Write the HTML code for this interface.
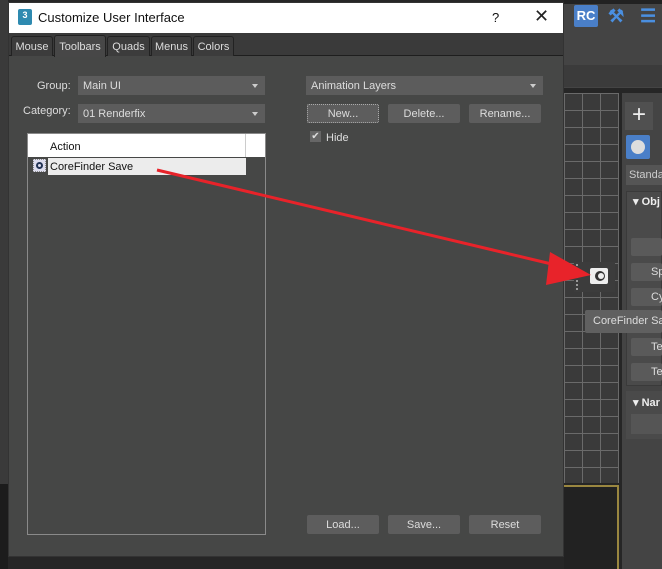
<!DOCTYPE html><html><head><style>
*{margin:0;padding:0;box-sizing:border-box}
body{width:662px;height:569px;overflow:hidden;background:#262626;font-family:"Liberation Sans",sans-serif;font-size:11px;color:#ddd;position:relative}
.a{position:absolute}
.combo{position:absolute;background:#5c5c5c;height:19px;color:#ddd;padding:4px 5px 0;font-size:11px}
.combo:after{content:"";position:absolute;right:7px;top:8px;border:3px solid transparent;border-top:4px solid #ccc}
.btn{position:absolute;background:#5d5d5d;height:19px;width:72px;border-radius:2px;text-align:center;line-height:21px;color:#ddd;font-size:11px}
.tab{position:absolute;top:36px;height:20px;background:#3c3c3c;border:1px solid #222;border-bottom:none;border-radius:3px 3px 0 0;line-height:20px;text-align:center;color:#ddd;font-size:11px}
</style></head><body>
<div class="a" style="left:0;top:0;width:8px;height:484px;background:#3a3a3a"></div>
<div class="a" style="left:0;top:484px;width:8px;height:85px;background:#1c1c1c"></div>
<div class="a" style="left:564px;top:0;width:98px;height:88px;background:#444"></div>
<div class="a" style="left:564px;top:0;width:98px;height:4px;background:#222"></div>
<div class="a" style="left:574px;top:5px;width:24px;height:22px;background:#4a7fc8;border-radius:2px;color:#fff;font-weight:bold;font-size:13px;text-align:center;line-height:22px">RC</div>
<div class="a" style="left:608px;top:6px;color:#4a8fe0;font-size:18px;font-weight:bold">⚒</div>
<div class="a" style="left:640px;top:6px;color:#4a8fe0;font-size:18px;font-weight:bold">☰</div>
<div class="a" style="left:564px;top:65px;width:98px;height:22px;background:#3b3b3b"></div>
<div class="a" style="left:564px;top:93px;width:55px;height:390px;background:#3a3a3a;background-image:linear-gradient(#6a6a6a 1px,transparent 1px),linear-gradient(90deg,#6a6a6a 1px,transparent 1px);background-size:18px 17px"></div>
<div class="a" style="left:564px;top:485px;width:55px;height:84px;background:#222;border-top:2px solid #9a8740;border-right:2px solid #9a8740"></div>
<div class="a" style="left:622px;top:93px;width:40px;height:476px;background:#444"></div>
<div class="a" style="left:625px;top:102px;width:28px;height:28px;background:#505050;color:#eee;font-size:24px;text-align:center;line-height:26px">+</div>
<div class="a" style="left:626px;top:135px;width:24px;height:24px;background:#4a7fc8;border-radius:2px"><div class="a" style="left:5px;top:5px;width:14px;height:14px;border-radius:50%;background:#ddd"></div></div>
<div class="a" style="left:626px;top:165px;width:36px;height:20px;background:#555;color:#ccc;padding:4px 3px">Standa</div>
<div class="a" style="left:626px;top:191px;width:36px;height:195px;background:#4a4a4a;border:1px solid #3a3a3a"></div>
<div class="a" style="left:633px;top:195px;color:#eee;font-weight:bold;font-size:11px">▾ Obj</div>
<div class="a" style="left:631px;top:238px;width:31px;height:18px;background:#5a5a5a;border-radius:2px"></div>
<div class="a" style="left:631px;top:263px;width:31px;height:18px;background:#5a5a5a;border-radius:2px;color:#ddd;padding:3px 0 0 20px">Sp</div>
<div class="a" style="left:631px;top:288px;width:31px;height:18px;background:#5a5a5a;border-radius:2px;color:#ddd;padding:3px 0 0 20px">Cy</div>
<div class="a" style="left:631px;top:338px;width:31px;height:18px;background:#5a5a5a;border-radius:2px;color:#ddd;padding:3px 0 0 20px">Te</div>
<div class="a" style="left:631px;top:363px;width:31px;height:18px;background:#5a5a5a;border-radius:2px;color:#ddd;padding:3px 0 0 20px">Te</div>
<div class="a" style="left:626px;top:391px;width:36px;height:48px;background:#4a4a4a"></div>
<div class="a" style="left:633px;top:396px;color:#eee;font-weight:bold">▾ Nar</div>
<div class="a" style="left:631px;top:414px;width:31px;height:20px;background:#555"></div>
<div class="a" style="left:574px;top:262px;width:41px;height:30px;background:#3c3c3c"></div>
<div class="a" style="left:576px;top:264px;width:4px;height:26px;border-left:2px dotted #999"></div>
<div class="a" style="left:590px;top:268px;width:18px;height:16px;background:#eee;border-radius:2px"><div class="a" style="left:5px;top:3px;width:10px;height:10px;border-radius:50%;background:#333"></div><div class="a" style="left:8px;top:5px;width:6px;height:6px;border-radius:50%;background:#eee"></div></div>
<div class="a" style="left:585px;top:310px;width:77px;height:23px;background:#606060;border-radius:2px;color:#ddd;padding:5px 0 0 8px;white-space:nowrap;overflow:hidden">CoreFinder Save</div>
<div class="a" style="left:8px;top:2px;width:556px;height:555px;background:#464746;border:1px solid #333"></div>
<div class="a" style="left:9px;top:3px;width:554px;height:30px;background:#fff"></div>
<div class="a" style="left:18px;top:9px;width:14px;height:16px;background:#2e8ab0;border-radius:2px;color:#fff;font-size:9px;font-weight:bold;text-align:center;line-height:12px">3</div>
<div class="a" style="left:38px;top:10px;color:#111;font-size:13px">Customize User Interface</div>
<div class="a" style="left:492px;top:10px;color:#111;font-size:13px">?</div>
<div class="a" style="left:534px;top:6px;color:#222;font-size:18px">✕</div>
<div class="a" style="left:9px;top:33px;width:554px;height:23px;background:#3a3a3a;border-bottom:1px solid #1e1e1e"></div>
<div class="tab" style="left:11px;width:42px">Mouse</div>
<div class="tab" style="left:54px;top:35px;height:22px;width:52px;background:#474747;line-height:22px">Toolbars</div>
<div class="tab" style="left:107px;width:43px">Quads</div>
<div class="tab" style="left:151px;width:41px">Menus</div>
<div class="tab" style="left:193px;width:41px">Colors</div>
<div class="a" style="left:37px;top:80px">Group:</div>
<div class="combo" style="left:78px;top:76px;width:187px">Main UI</div>
<div class="a" style="left:23px;top:105px">Category:</div>
<div class="combo" style="left:78px;top:104px;width:187px">01 Renderfix</div>
<div class="a" style="left:27px;top:133px;width:239px;height:402px;border:1px solid #8a8a8a"></div>
<div class="a" style="left:28px;top:134px;width:218px;height:23px;background:#fff;border-right:1px solid #ccc;color:#111;padding:7px 0 0 22px">Action</div>
<div class="a" style="left:246px;top:134px;width:19px;height:23px;background:#fff"></div>
<div class="a" style="left:48px;top:158px;width:198px;height:17px;background:#ececec;color:#111;padding:3px 0 0 2px">CoreFinder Save</div>
<div class="a" style="left:33px;top:159px;width:13px;height:13px;border:1px dotted #888;background:#dde"><div class="a" style="left:2px;top:2px;width:7px;height:7px;border:2px solid #235;border-radius:50%"></div></div>
<div class="combo" style="left:306px;top:76px;width:237px">Animation Layers</div>
<div class="btn" style="left:307px;top:104px;border:1px dotted #aaa;line-height:19px">New...</div>
<div class="btn" style="left:388px;top:104px">Delete...</div>
<div class="btn" style="left:469px;top:104px">Rename...</div>
<div class="a" style="left:310px;top:131px;width:11px;height:11px;background:#666;color:#ddd;font-size:10px;line-height:11px;text-align:center">✔</div>
<div class="a" style="left:326px;top:132px">Hide</div>
<div class="btn" style="left:307px;top:515px">Load...</div>
<div class="btn" style="left:388px;top:515px">Save...</div>
<div class="btn" style="left:469px;top:515px">Reset</div>
<svg class="a" style="left:0;top:0" width="662" height="569"><line x1="157" y1="170" x2="560" y2="266" stroke="#e8232a" stroke-width="3"/><polygon points="591,275 550,252 546,285" fill="#e8232a"/></svg>
</body></html>
